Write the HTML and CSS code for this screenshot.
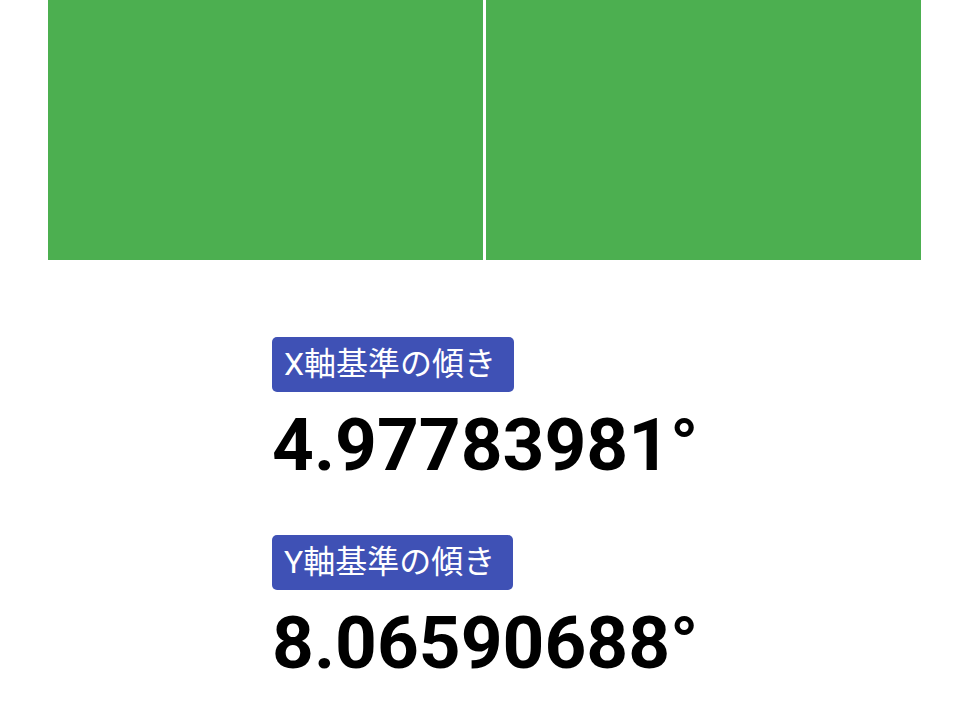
FILE: index.html
```html
<!DOCTYPE html>
<html lang="ja">
<head>
<meta charset="utf-8">
<title>傾き</title>
<link rel="stylesheet" href="styles.css">
</head>
<body>
<div class="panels">
  <div class="panel"></div>
  <div class="panel"></div>
</div>
<div class="readings">
  <div class="reading">
    <div class="badge">X軸基準の傾き</div>
    <div class="value">4.97783981°</div>
  </div>
  <div class="reading">
    <div class="badge">Y軸基準の傾き</div>
    <div class="value">8.06590688°</div>
  </div>
</div>
</body>
</html>
```
FILE: styles.css
```css
html, body {
  margin: 0;
  padding: 0;
  background: #ffffff;
}
body {
  font-family: Roboto, "Noto Sans CJK JP", sans-serif;
}
.panels {
  display: flex;
  gap: 3px;
  height: 260px;
  margin: 0 47px 0 48px;
}
.panel {
  flex: 1;
  background: #4caf50;
}
.readings {
  display: flex;
  flex-direction: column;
  gap: 37px;
  padding: 77px 0 0 272px;
}
.reading {
  display: flex;
  flex-direction: column;
  align-items: flex-start;
}
.badge {
  background: #3f51b5;
  color: #ffffff;
  border-radius: 5px;
  height: 55px;
  line-height: 55px;
  padding: 0 18px 0 12px;
  font-family: Roboto, "Noto Sans CJK JP", sans-serif;
  font-size: 32px;
  box-sizing: border-box;
}
.value {
  font-family: Roboto, sans-serif;
  font-weight: 700;
  font-size: 73px;
  line-height: 106px;
  color: #000000;
}
```
